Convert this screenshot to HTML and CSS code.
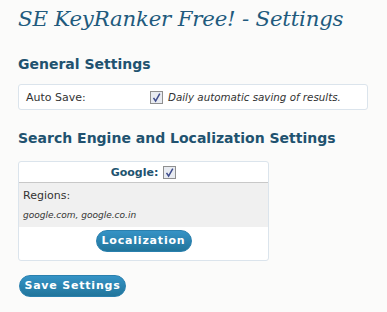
FILE: index.html
```html
<!DOCTYPE html>
<html>
<head>
<meta charset="utf-8">
<link rel="stylesheet" href="styles.css">
</head>
<body>
<div class="wrap">
  <h1 class="title">SE KeyRanker Free! - Settings</h1>
  <h2 class="section">General Settings</h2>
  <div class="panel general">
    <span class="label">Auto Save:</span>
    <span class="cb"><svg width="13" height="13" viewBox="0 0 13 13"><rect x="0.5" y="0.5" width="12" height="12" fill="#e8ebf1" stroke="#8f8f8f"/><path d="M3.5 6.8 L5.6 10 L9.8 2.6" fill="none" stroke="#3f4c8c" stroke-width="1.5"/></svg></span>
    <span class="hint">Daily automatic saving of results.</span>
  </div>
  <h2 class="section second">Search Engine and Localization Settings</h2>
  <div class="panel engine">
    <div class="eng-head">Google: <span class="cb"><svg width="13" height="13" viewBox="0 0 13 13"><rect x="0.5" y="0.5" width="12" height="12" fill="#e8ebf1" stroke="#8f8f8f"/><path d="M3.5 6.8 L5.6 10 L9.8 2.6" fill="none" stroke="#3f4c8c" stroke-width="1.5"/></svg></span></div>
    <div class="eng-body">
      <div class="regions">Regions:</div>
      <div class="region-list">google.com, google.co.in</div>
    </div>
    <div class="eng-foot"><button class="btn">Localization</button></div>
  </div>
  <div class="save-row"><button class="btn">Save Settings</button></div>
</div>
</body>
</html>
```
FILE: styles.css
```css
html, body {
  margin: 0;
  padding: 0;
  background: #fbfbfa;
}
.wrap {
  padding: 0 0 0 18px;
  font-family: "DejaVu Sans", Verdana, sans-serif;
  color: #333;
}
.title {
  margin: 0;
  padding-top: 6px;
  height: 38px;
  font-family: "DejaVu Serif", Georgia, serif;
  font-style: italic;
  font-weight: normal;
  font-size: 21.3px;
  line-height: 26px;
  color: #215a7d;
  letter-spacing: -0.2px;
}
.section {
  margin: 11px 0 0 0;
  font-size: 14px;
  line-height: 18px;
  font-weight: bold;
  color: #21526f;
}
.second {
  margin-top: 19px;
}
.panel {
  background: #fff;
  border: 1px solid #dbe4ec;
  border-radius: 3px;
  box-sizing: border-box;
}
.general {
  margin-top: 11px;
  width: 350px;
  height: 26px;
  display: flex;
  align-items: center;
  font-size: 11px;
}
.label {
  padding-left: 7px;
  width: 124px;
  color: #333;
}
.cb {
  display: inline-flex;
  width: 13px;
  height: 13px;
}
.hint {
  margin-left: 5px;
  font-style: italic;
  font-size: 10.3px;
  color: #333;
}
.engine {
  margin-top: 14px;
  width: 251px;
  overflow: hidden;
}
.eng-head {
  height: 20px;
  display: flex;
  align-items: center;
  justify-content: center;
  gap: 5px;
  font-size: 11px;
  font-weight: bold;
  color: #21526f;
  border-bottom: 1px solid #c8c8c8;
}
.eng-body {
  background: #f0f0f0;
  padding: 6px 4px 4px 4px;
  height: 44px;
  box-sizing: border-box;
}
.regions {
  font-size: 11px;
  line-height: 14px;
  color: #333;
}
.region-list {
  margin-top: 6px;
  font-size: 9px;
  font-style: italic;
  line-height: 12px;
  color: #333;
}
.eng-foot {
  height: 33px;
  display: flex;
  justify-content: center;
  padding-top: 3px;
  box-sizing: border-box;
}
.btn {
  height: 22px;
  padding: 0;
  border: 1px solid #2a80ae;
  border-radius: 11px;
  background: linear-gradient(#3593c6, #21759b);
  color: #fff;
  font-family: "DejaVu Sans", Verdana, sans-serif;
  font-weight: bold;
  font-size: 11px;
  letter-spacing: 0.8px;
  line-height: 20px;
  white-space: nowrap;
}
.eng-foot .btn {
  width: 96px;
}
.save-row {
  margin-top: 13px;
}
.save-row .btn {
  width: 107px;
  margin-left: 1px;
}
```
